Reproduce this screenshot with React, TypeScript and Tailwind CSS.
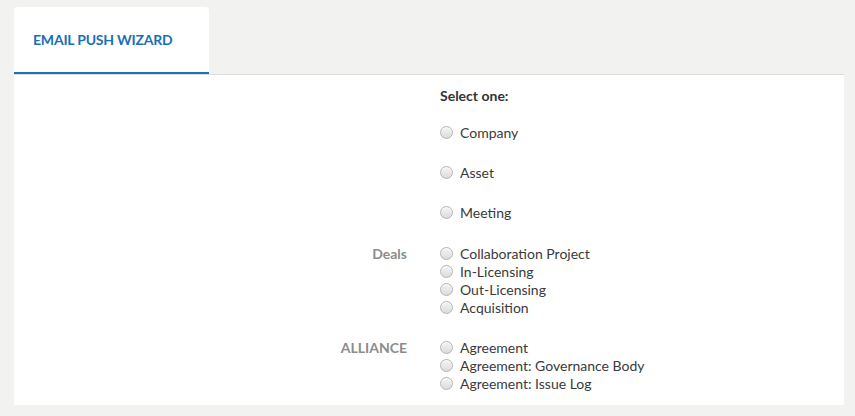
import React from "react";

function Radio() {
  return (
    <span className="mt-[-2px] inline-block h-[13px] w-[13px] shrink-0 rounded-full border border-[#b4b4b4] bg-[linear-gradient(#f4f4f4,#dcdcdc)] shadow-[inset_0_1px_1px_rgba(255,255,255,0.8)]" />
  );
}

function Option({ label }: { label: string }) {
  return (
    <div className="flex h-[18px] items-center">
      <Radio />
      <span className="ml-[7px] text-[14px] leading-[18px] text-[#3a3a3a]">{label}</span>
    </div>
  );
}

function Row({
  label,
  options,
  className,
}: {
  label?: string;
  options: string[];
  className?: string;
}) {
  return (
    <div className={`grid grid-cols-[393px_1fr] gap-x-[33px] ${className ?? ""}`}>
      <div className="text-right text-[14px] font-bold leading-[18px] text-[#8c8c8c]">{label}</div>
      <div className="flex flex-col">
        {options.map((o) => (
          <Option key={o} label={o} />
        ))}
      </div>
    </div>
  );
}

export default function App() {
  return (
    <div
      className="min-h-[416px] w-full bg-[#f2f2f0] pl-[14px] pr-[11px] pt-[7px]"
      style={{ fontFamily: "Lato, 'Open Sans', sans-serif" }}
    >
      <div className="flex">
        <div className="flex h-[67px] w-[195px] items-center rounded-t-[4px] border-b-2 border-[#1a73b8] bg-white pl-[19px]">
          <span className="text-[14px] font-bold tracking-[-0.2px] text-[#1a6fb5]">EMAIL PUSH WIZARD</span>
        </div>
      </div>
      <div className="border-t border-[#dcdcdc] bg-white pb-[12px] pt-[12px]">
        <div className="grid grid-cols-[393px_1fr] gap-x-[33px]">
          <div />
          <div className="text-[14px] font-bold leading-[18px] text-[#333]">Select one:</div>
        </div>
        <Row options={["Company"]} className="mt-[19px]" />
        <Row options={["Asset"]} className="mt-[22px]" />
        <Row options={["Meeting"]} className="mt-[22px]" />
        <Row
          label="Deals"
          options={["Collaboration Project", "In-Licensing", "Out-Licensing", "Acquisition"]}
          className="mt-[23px]"
        />
        <Row
          label="ALLIANCE"
          options={["Agreement", "Agreement: Governance Body", "Agreement: Issue Log"]}
          className="mt-[22px]"
        />
      </div>
    </div>
  );
}
